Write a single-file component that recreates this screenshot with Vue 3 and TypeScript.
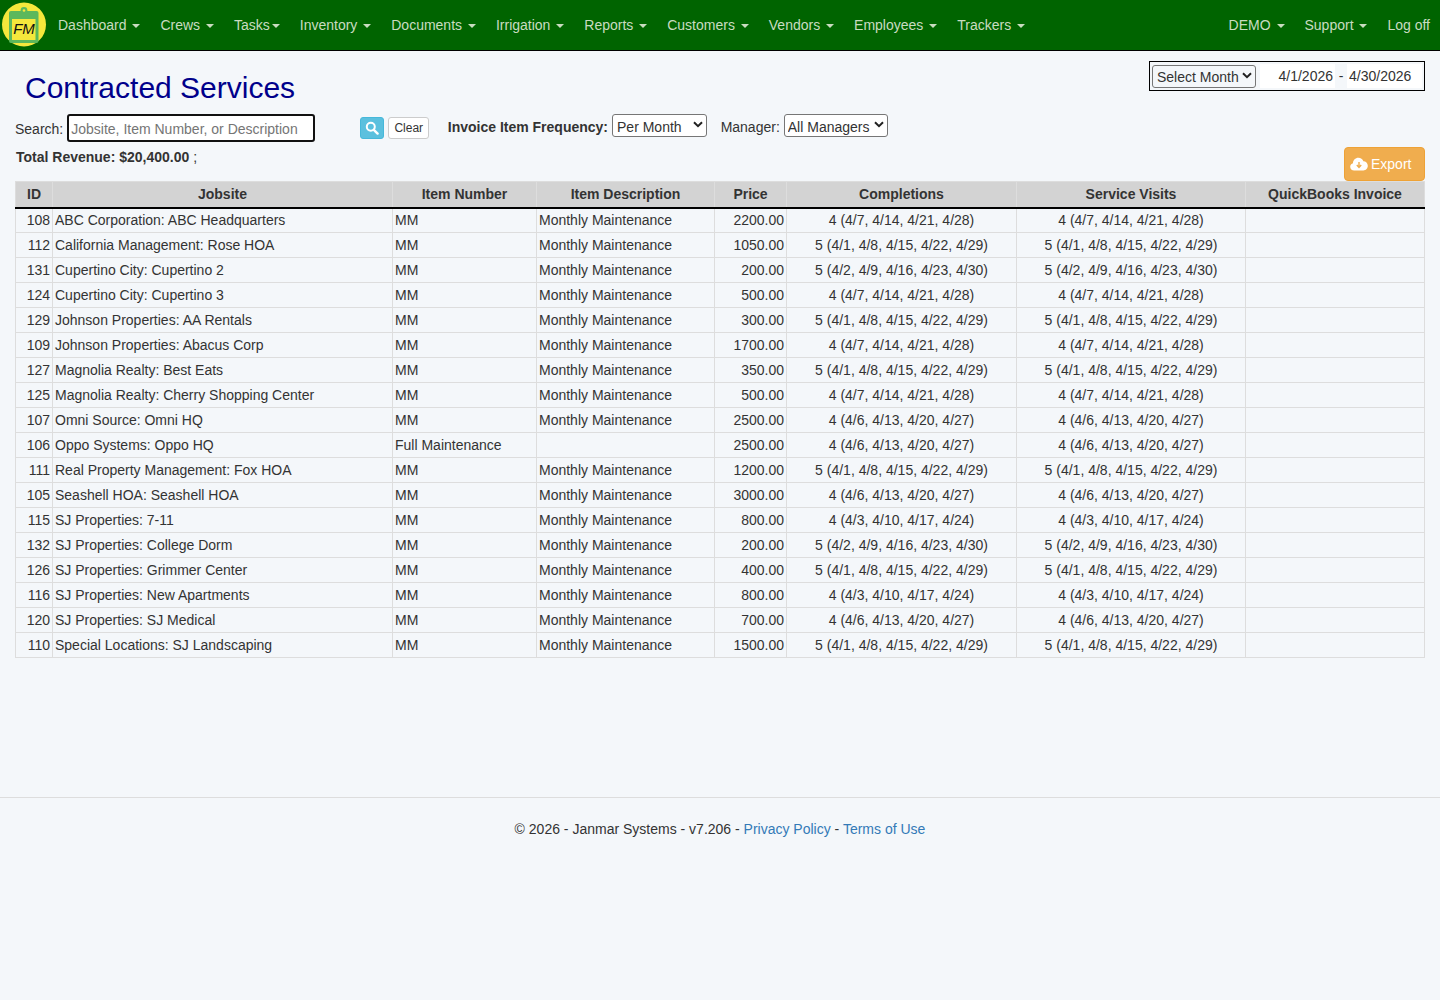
<template>
  <div class="page">
    <nav class="navbar">
      <div class="brand">
        <svg width="48" height="48" viewBox="0 0 48 48">
          <circle cx="24" cy="23.5" r="22" fill="#f5e83c" />
          <rect x="9" y="10" width="29.5" height="32" rx="2" fill="#5cb85c" />
          <circle cx="24" cy="9.5" r="3.4" fill="#5cb85c" />
          <circle cx="24" cy="9.5" r="1.3" fill="#f5e83c" />
          <rect x="12" y="18" width="23.5" height="21" fill="#f5e83c" />
          <text x="24" y="33" class="brand-text" text-anchor="middle">FM</text>
        </svg>
      </div>
      <ul class="menu">
        <li v-for="item in leftMenu" :key="item"><a>{{ item }}<span class="caret" :class="{ tight: item === 'Tasks' }"></span></a></li>
      </ul>
      <ul class="menu right">
        <li><a>DEMO<span class="caret"></span></a></li>
        <li><a>Support<span class="caret"></span></a></li>
        <li><a>Log off</a></li>
      </ul>
    </nav>

    <main class="content">
      <div class="title-row">
        <h1>Contracted Services</h1>
        <div class="date-box">
          <select class="select month-select">
            <option>Select Month</option>
          </select>
          <input class="date-input" value="4/1/2026" />
          <span class="dash">-</span>
          <input class="date-input end" value="4/30/2026" />
        </div>
      </div>

      <div class="filters">
        <label class="search-label">Search:</label>
        <input class="search" placeholder="Jobsite, Item Number, or Description" />
        <button class="btn-search" aria-label="Search">
          <svg width="14" height="14" viewBox="0 0 14 14">
            <circle cx="5.8" cy="5.8" r="4" fill="none" stroke="#fff" stroke-width="2" />
            <path d="M8.8 8.8 L12.6 12.6" stroke="#fff" stroke-width="2.4" stroke-linecap="round" />
          </svg>
        </button>
        <button class="btn-clear">Clear</button>
        <label class="freq-label">Invoice Item Frequency:</label>
        <select class="select freq-select">
          <option>Per Month</option>
        </select>
        <label class="manager-label">Manager:</label>
        <select class="select manager-select">
          <option>All Managers</option>
        </select>
      </div>

      <div class="total-row">
        <div class="total"><b>Total Revenue: $20,400.00</b> ;</div>
        <button class="btn-export">
          <svg width="18" height="14" viewBox="0 0 18 14">
            <path d="M4.2 13.5 C1.8 13.5 0.2 11.9 0.2 9.8 C0.2 8 1.4 6.7 3 6.3 C3 3.2 5.4 0.8 8.4 0.8 C10.7 0.8 12.6 2.2 13.4 4.2 C15.8 4.2 17.8 6.2 17.8 8.8 C17.8 11.4 15.8 13.5 13.4 13.5 Z" fill="#fff" />
            <path d="M9 5 V10 M6.8 8 L9 10.4 L11.2 8" fill="none" stroke="#f0ad4e" stroke-width="1.4" />
          </svg>
          Export
        </button>
      </div>

      <table class="services">
        <colgroup>
          <col v-for="w in colWidths" :key="w" :style="{ width: w + 'px' }" />
        </colgroup>
        <thead>
          <tr>
            <th>ID</th>
            <th>Jobsite</th>
            <th>Item Number</th>
            <th>Item Description</th>
            <th>Price</th>
            <th>Completions</th>
            <th>Service Visits</th>
            <th>QuickBooks Invoice</th>
          </tr>
        </thead>
        <tbody>
          <tr v-for="row in rows" :key="row.id">
            <td class="num">{{ row.id }}</td>
            <td>{{ row.jobsite }}</td>
            <td>{{ row.item }}</td>
            <td>{{ row.desc }}</td>
            <td class="num">{{ row.price }}</td>
            <td class="center">{{ row.dates }}</td>
            <td class="center">{{ row.dates }}</td>
            <td></td>
          </tr>
        </tbody>
      </table>
    </main>

    <footer class="footer">
      <hr />
      <p>© 2026 - Janmar Systems - v7.206 - <a>Privacy Policy</a> - <a>Terms of Use</a></p>
    </footer>
  </div>
</template>

<script setup lang="ts">
interface ServiceRow {
  id: number
  jobsite: string
  item: string
  desc: string
  price: string
  dates: string
}

const leftMenu = [
  'Dashboard', 'Crews', 'Tasks', 'Inventory', 'Documents', 'Irrigation',
  'Reports', 'Customers', 'Vendors', 'Employees', 'Trackers'
]

const colWidths = [37, 340, 144, 178, 72, 230, 229, 179]

const MON = '4 (4/6, 4/13, 4/20, 4/27)'
const TUE = '4 (4/7, 4/14, 4/21, 4/28)'
const FRI = '4 (4/3, 4/10, 4/17, 4/24)'
const WED = '5 (4/1, 4/8, 4/15, 4/22, 4/29)'
const THU = '5 (4/2, 4/9, 4/16, 4/23, 4/30)'

function mm(id: number, jobsite: string, price: string, dates: string): ServiceRow {
  return { id, jobsite, item: 'MM', desc: 'Monthly Maintenance', price, dates }
}

const rows: ServiceRow[] = [
  mm(108, 'ABC Corporation: ABC Headquarters', '2200.00', TUE),
  mm(112, 'California Management: Rose HOA', '1050.00', WED),
  mm(131, 'Cupertino City: Cupertino 2', '200.00', THU),
  mm(124, 'Cupertino City: Cupertino 3', '500.00', TUE),
  mm(129, 'Johnson Properties: AA Rentals', '300.00', WED),
  mm(109, 'Johnson Properties: Abacus Corp', '1700.00', TUE),
  mm(127, 'Magnolia Realty: Best Eats', '350.00', WED),
  mm(125, 'Magnolia Realty: Cherry Shopping Center', '500.00', TUE),
  mm(107, 'Omni Source: Omni HQ', '2500.00', MON),
  { id: 106, jobsite: 'Oppo Systems: Oppo HQ', item: 'Full Maintenance', desc: '', price: '2500.00', dates: MON },
  mm(111, 'Real Property Management: Fox HOA', '1200.00', WED),
  mm(105, 'Seashell HOA: Seashell HOA', '3000.00', MON),
  mm(115, 'SJ Properties: 7-11', '800.00', FRI),
  mm(132, 'SJ Properties: College Dorm', '200.00', THU),
  mm(126, 'SJ Properties: Grimmer Center', '400.00', WED),
  mm(116, 'SJ Properties: New Apartments', '800.00', FRI),
  mm(120, 'SJ Properties: SJ Medical', '700.00', MON),
  mm(110, 'Special Locations: SJ Landscaping', '1500.00', WED)
]
</script>

<style>
html,
body {
  background: #f4f7fa;
}
</style>

<style scoped>
.page {
  min-height: 1000px;
  font-family: "Liberation Sans", Arial, sans-serif;
  font-size: 14px;
  color: #333;
  background: #f4f7fa;
}

.navbar {
  display: flex;
  align-items: center;
  height: 50px;
  background: #006400;
  border-bottom: 1px solid #000;
}

.brand {
  width: 48px;
  height: 48px;
  flex: none;
}

.brand-text {
  font-family: "Liberation Sans", Arial, sans-serif;
  font-size: 15px;
  font-style: italic;
  fill: #111;
}

.menu {
  display: flex;
  margin: 0;
  padding: 0;
  list-style: none;
}

.menu.right {
  margin-left: auto;
}

.menu a {
  display: block;
  padding: 0 10px;
  color: #c9dcc0;
  line-height: 50px;
}

.caret {
  display: inline-block;
  width: 0;
  height: 0;
  margin-left: 5.9px;
  vertical-align: middle;
  border-top: 4px solid #c9dcc0;
  border-left: 4px solid transparent;
  border-right: 4px solid transparent;
}

.caret.tight {
  margin-left: 2px;
}

.content {
  padding: 10px 15px 0;
}

.title-row {
  display: flex;
  justify-content: space-between;
  align-items: flex-start;
  height: 53px;
}

h1 {
  margin: 10px 0 0 10px;
  font-size: 30px;
  font-weight: 400;
  line-height: 33px;
  color: #00008b;
}

.date-box {
  display: flex;
  align-items: center;
  width: 276px;
  height: 30px;
  box-sizing: border-box;
  padding: 0 2px;
  border: 1px solid #000;
}

.select {
  height: 23px;
  padding: 2px 16px 0 4px;
  font: 14px "Liberation Sans", Arial, sans-serif;
  color: #333;
  background: #fff url("data:image/svg+xml,%3Csvg xmlns='http://www.w3.org/2000/svg' width='10' height='7'%3E%3Cpath d='M1 1.2l4 4 4-4' fill='none' stroke='%23222' stroke-width='2'/%3E%3C/svg%3E") no-repeat right 3px top 6px;
  border: 1px solid #767676;
  border-radius: 3px;
  appearance: none;
}

.month-select {
  width: 104px;
  padding-top: 1px;
  background-color: #f4f7fa;
}

.date-input {
  width: 75px;
  height: 24px;
  box-sizing: border-box;
  margin-left: 4px;
  padding: 0 2px;
  border: 0;
  outline: 0;
  background: #fff;
  font: 14px "Liberation Sans", Arial, sans-serif;
  color: #333;
  text-align: right;
}

.date-input.end {
  margin-left: 0;
  text-align: left;
}

.dash {
  width: 12px;
  text-align: center;
}

.filters {
  display: flex;
  align-items: center;
  height: 28px;
}

.search-label {
  margin-top: 2px;
  margin-right: 4px;
}

.search {
  width: 248px;
  height: 28px;
  box-sizing: border-box;
  padding: 2px 2px 0;
  background: #fff;
  border: 2px solid #111;
  border-radius: 3px;
  outline: 0;
  font: 14px "Liberation Sans", Arial, sans-serif;
}

.btn-search {
  display: flex;
  align-items: center;
  justify-content: center;
  width: 24px;
  height: 22px;
  margin-left: 45px;
  padding: 0;
  background: #5bc0de;
  border: 1px solid #46b8da;
  border-radius: 3px;
}

.btn-clear {
  width: 41px;
  height: 22px;
  margin-left: 4px;
  padding: 0;
  background: #fff;
  border: 1px solid #ccc;
  border-radius: 3px;
  font: 12px "Liberation Sans", Arial, sans-serif;
  color: #333;
}

.freq-label {
  margin: 0 4px 2px 18.5px;
  font-weight: 700;
}

.freq-select {
  width: 95px;
  margin-top: -5px;
}

.manager-label {
  margin: 0 4px 2px 13.6px;
}

.manager-select {
  width: 104px;
  margin-top: -5px;
  padding-left: 3px;
}

.total-row {
  display: flex;
  justify-content: space-between;
  align-items: flex-start;
  height: 34px;
  margin-top: 5px;
}

.total {
  margin: 2px 0 0 1px;
  line-height: 16px;
}

.btn-export {
  display: flex;
  align-items: center;
  gap: 3px;
  width: 81px;
  height: 34px;
  padding: 0 0 0 5px;
  background: #f0ad4e;
  border: 1px solid #eea236;
  border-radius: 4px;
  font: 14px "Liberation Sans", Arial, sans-serif;
  color: #fff;
}

.services {
  width: 1409px;
  table-layout: fixed;
  border-collapse: collapse;
  border: 1px solid #ddd;
}

.services th {
  height: 26px;
  padding: 0 2px;
  box-sizing: border-box;
  background: #d3d3d3;
  border-left: 1px solid #ddd;
  border-bottom: 2px solid #000;
  font-weight: 700;
  text-align: center;
}

.services td {
  height: 25px;
  padding: 0 2px;
  box-sizing: border-box;
  border: 1px solid #ddd;
  white-space: nowrap;
  overflow: hidden;
}

.num {
  text-align: right;
}

.center {
  text-align: center;
}

.footer {
  margin-top: 139px;
}

.footer hr {
  margin: 0;
  border: 0;
  border-top: 1px solid #ddd;
}

.footer p {
  margin: 23px 0 0;
  line-height: 17px;
  text-align: center;
}

.footer a {
  color: #337ab7;
}
</style>
